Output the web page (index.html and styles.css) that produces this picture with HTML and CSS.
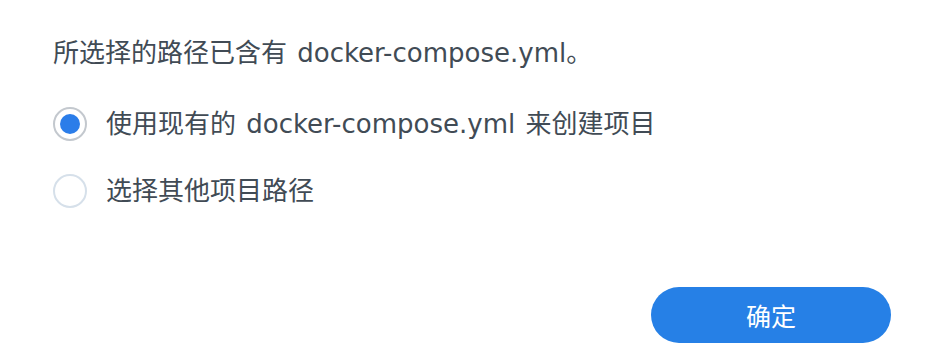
FILE: index.html
```html
<!DOCTYPE html>
<html lang="zh-CN">
<head>
<meta charset="utf-8">
<link rel="stylesheet" href="styles.css">
</head>
<body>
<div class="dialog">
  <p class="message">所选择的路径已含有 docker-compose.yml。</p>
  <div class="options">
    <label class="option">
      <span class="radio checked"><span class="dot"></span></span>
      <span class="label">使用现有的 docker-compose.yml 来创建项目</span>
    </label>
    <label class="option">
      <span class="radio"></span>
      <span class="label">选择其他项目路径</span>
    </label>
  </div>
  <div class="footer">
    <button class="btn-primary">确定</button>
  </div>
</div>
</body>
</html>
```

FILE: styles.css
```css
html, body {
  margin: 0;
  padding: 0;
  background: #ffffff;
}
body {
  width: 940px;
  height: 362px;
  overflow: hidden;
  font-family: "DejaVu Sans", "Noto Sans CJK SC", sans-serif;
  color: #414b55;
}
.dialog {
  display: flex;
  flex-direction: column;
  padding: 36px 49px 0 53px;
  box-sizing: border-box;
  height: 362px;
}
.message {
  margin: 0;
  font-size: 26px;
  line-height: 34px;
  word-spacing: 2px;
}
.options {
  display: flex;
  flex-direction: column;
  gap: 33px;
  margin-top: 37px;
}
.option {
  display: flex;
  align-items: center;
  gap: 19px;
  height: 34px;
}
.radio {
  width: 34px;
  height: 34px;
  box-sizing: border-box;
  border-radius: 50%;
  border: 2px solid #d6e0ea;
  display: flex;
  align-items: center;
  justify-content: center;
  flex: none;
}
.radio.checked {
  border-color: #c3c8ce;
}
.dot {
  width: 20px;
  height: 20px;
  border-radius: 50%;
  background: #2b7de9;
}
.label {
  font-size: 26px;
  line-height: 34px;
  word-spacing: 2px;
}
.footer {
  display: flex;
  justify-content: flex-end;
  margin-top: 79px;
}
.btn-primary {
  width: 240px;
  height: 56px;
  border: none;
  border-radius: 28px;
  background: #2680e6;
  color: #ffffff;
  font-family: "Noto Sans CJK SC", sans-serif;
  font-size: 25px;
  padding: 0;
}
```
